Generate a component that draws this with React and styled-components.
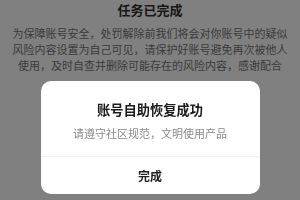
import React from 'react';
import styled, { createGlobalStyle } from 'styled-components';

const Global = createGlobalStyle`
    html, body {
        margin: 0;
        padding: 0;
        background: #808080;
        font-family: "Noto Sans CJK SC", "Noto Sans", sans-serif;
    }
`
const Page = styled.div`
    width: 300px;
    height: 200px;
    display: flex;
    flex-direction: column;
    align-items: center;
    overflow: hidden;
`
const PageTitle = styled.div`
    font-size: 13px;
    line-height: 20px;
    font-weight: 700;
    color: #171717;
`
const Notice = styled.p`
    margin: 5px 0 0;
    padding: 0 12px;
    box-sizing: border-box;
    width: 300px;
    font-size: 11px;
    line-height: 16px;
    text-align: center;
    color: #3a3a3a;
`
const Overlay = styled.div`
    position: fixed;
    inset: 0;
    display: flex;
    justify-content: center;
    align-items: flex-end;
    padding-bottom: 6px;
`
const Dialog = styled.div`
    width: 219px;
    height: 113px;
    background: #fff;
    border-radius: 10px;
    display: flex;
    flex-direction: column;
    overflow: hidden;
`
const Body = styled.div`
    padding: 20px 0 15px;
    display: flex;
    flex-direction: column;
    align-items: center;
    border-bottom: 1px solid #efefef;
`
const DialogTitle = styled.div`
    font-size: 13.25px;
    line-height: 18px;
    font-weight: 700;
    color: #1c1c1c;
`
const DialogText = styled.div`
    margin-top: 6px;
    font-size: 11px;
    line-height: 16px;
    color: #8a8a8a;
`
const Action = styled.div`
    flex: 1;
    display: flex;
    align-items: center;
    justify-content: center;
    font-size: 12px;
    font-weight: 700;
    color: #222;
`

export default function App() {
    return (
        <Page>
            <Global />
            <PageTitle>任务已完成</PageTitle>
            <Notice>
                为保障账号安全，处罚解除前我们将会对你账号中的疑似风险内容设置为自己可见，请保护好账号避免再次被他人使用，及时自查并删除可能存在的风险内容，感谢配合
            </Notice>
            <Overlay>
                <Dialog>
                    <Body>
                        <DialogTitle>账号自助恢复成功</DialogTitle>
                        <DialogText>请遵守社区规范，文明使用产品</DialogText>
                    </Body>
                    <Action>完成</Action>
                </Dialog>
            </Overlay>
        </Page>
    )
}
